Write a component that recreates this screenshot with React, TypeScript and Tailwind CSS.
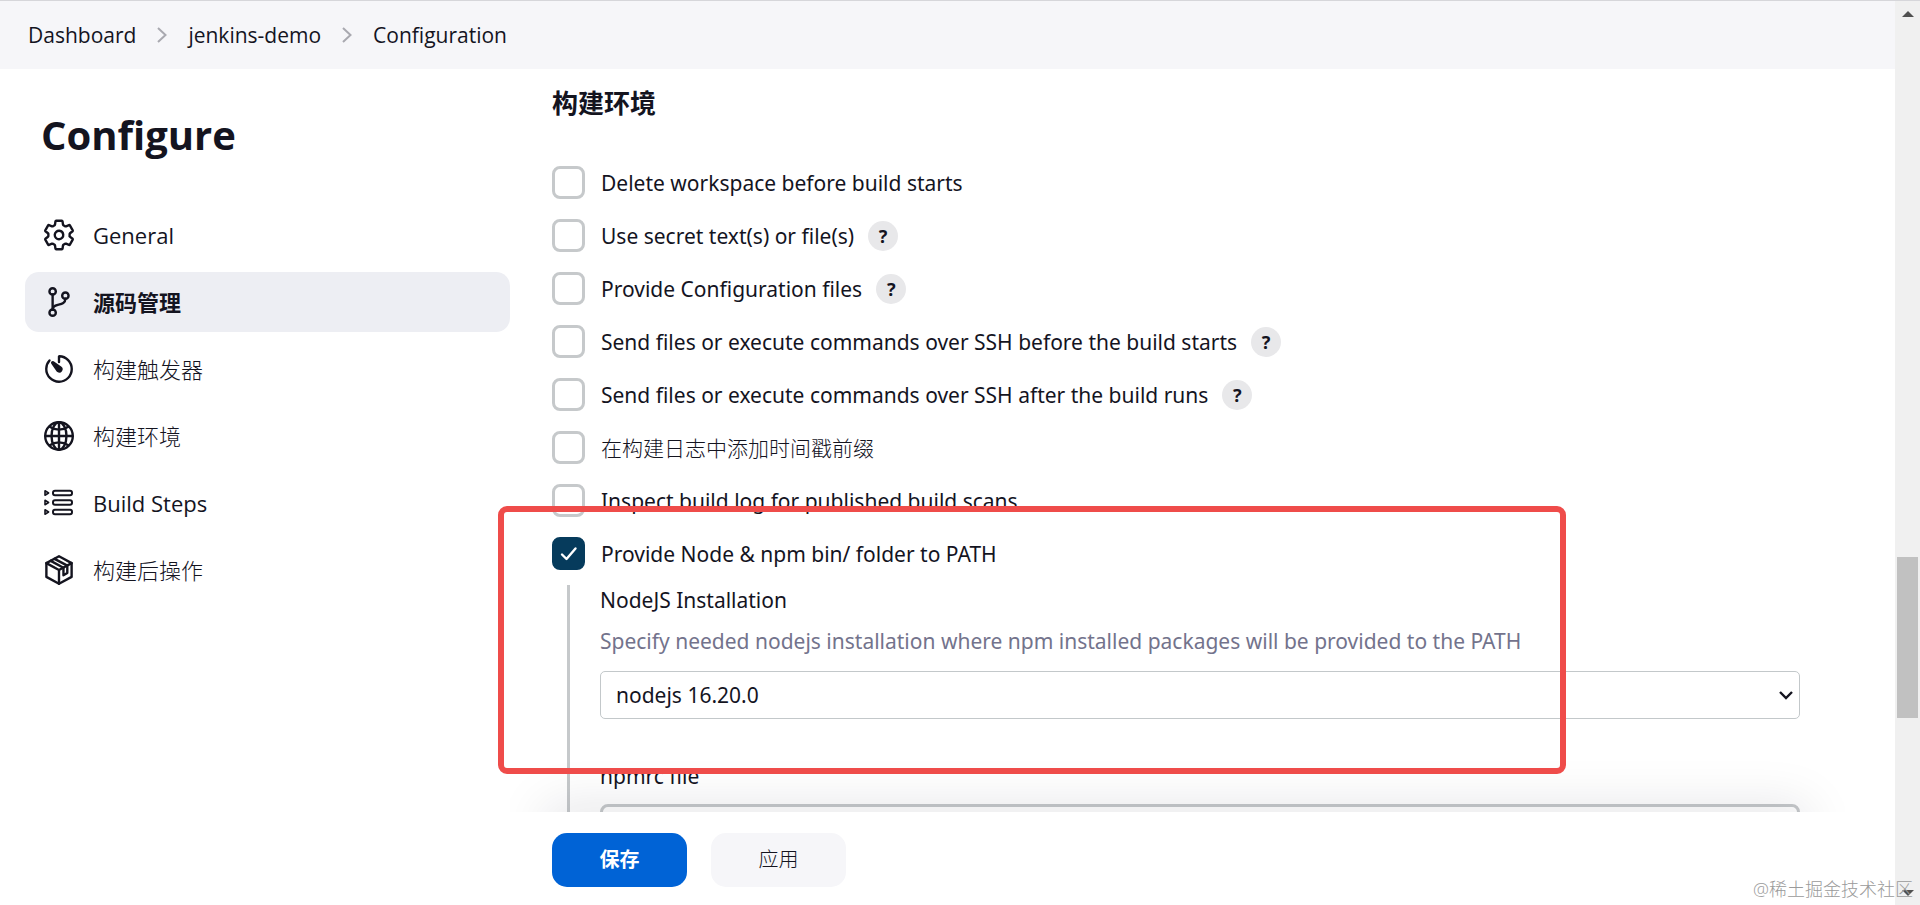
import React from "react";
import {
  IoSettingsOutline,
  IoGitBranchOutline,
  IoTimerOutline,
  IoGlobeOutline,
} from "react-icons/io5";

function StepsIcon() {
  return (
    <svg viewBox="0 0 34 34" className="size-[34px]" fill="none" stroke="currentColor" strokeWidth="2" strokeLinejoin="round">
      {[7, 16.5, 26].map((y) => (
        <g key={y}>
          <path d={`M3 ${y - 2.2}v4.4l3.600-2.200z`} strokeWidth="1.6" />
          <rect x="11" y={y - 2.3} width="19" height="4.6" rx="2" />
        </g>
      ))}
    </svg>
  );
}

function PackageIcon() {
  return (
    <svg viewBox="0 0 512 512" className="size-[34px]" fill="none" stroke="currentColor" strokeWidth="34" strokeLinejoin="round" strokeLinecap="round">
      <path d="M256 50 446 152v208L256 464 66 360V152z" />
      <path d="M66 152l190 104 190-104M256 256v206" />
      <path d="M131 118l192 104v112l58-32V190L189 88" />
    </svg>
  );
}

const navItems = [
  { label: "General", icon: <IoSettingsOutline size={34} /> },
  { label: "源码管理", icon: <IoGitBranchOutline size={34} />, active: true },
  { label: "构建触发器", icon: <IoTimerOutline size={34} />, cjk: true },
  { label: "构建环境", icon: <IoGlobeOutline size={34} />, cjk: true },
  { label: "Build Steps", icon: <StepsIcon /> },
  { label: "构建后操作", icon: <PackageIcon />, cjk: true },
];

const options = [
  { id: "delete-ws", label: "Delete workspace before build starts" },
  { id: "secret", label: "Use secret text(s) or file(s)", help: true },
  { id: "config-files", label: "Provide Configuration files", help: true },
  { id: "ssh-before", label: "Send files or execute commands over SSH before the build starts", help: true },
  { id: "ssh-after", label: "Send files or execute commands over SSH after the build runs", help: true },
  { id: "timestamps", label: "在构建日志中添加时间戳前缀", cjk: true },
  { id: "inspect", label: "Inspect build log for published build scans" },
  { id: "node", label: "Provide Node & npm bin/ folder to PATH", checked: true },
];

function Crumb({ children }: { children: string }) {
  return (
    <a href="#" className="text-[21px]">
      {children}
    </a>
  );
}

function CrumbArrow() {
  return (
    <svg viewBox="0 0 12 18" className="mx-5 h-[18px] w-3" fill="none" stroke="#a9a9b0" strokeWidth="2">
      <path d="M2 2l7.500 7L2 16" />
    </svg>
  );
}

function OptionRow({ id, label, help, cjk, checked }: { id: string; label: string; help?: boolean; cjk?: boolean; checked?: boolean }) {
  return (
    <div className="flex h-[33px] items-center">
      <span className="relative flex size-[33px] shrink-0">
        <input
          id={id}
          type="checkbox"
          defaultChecked={checked}
          className="peer size-[33px] appearance-none rounded-[8px] border-[3px] border-[#c6c9cb] bg-white checked:border-[#063b5c] checked:bg-[#063b5c]"
        />
        <svg viewBox="0 0 33 33" className="pointer-events-none absolute inset-0 hidden peer-checked:block" fill="none" stroke="#fff" strokeWidth="2.400" strokeLinecap="round" strokeLinejoin="round">
          <path d="M10 17.500l4.500 4.500L23.500 11.500" />
        </svg>
      </span>
      <label htmlFor={id} className={cjk ? "ml-4 font-light" : "ml-4"}>
        {label}
      </label>
      {help && (
        <button type="button" aria-label={`Help: ${label}`} className="ml-[14px] flex size-[30px] items-center justify-center rounded-full bg-[#e8e8ea] text-[18px] font-bold">
          ?
        </button>
      )}
    </div>
  );
}

export default function App() {
  return (
    <div className="relative flex h-screen overflow-hidden bg-white font-['Open_Sans','Noto_Sans_CJK_SC',sans-serif] leading-7 text-[#14141f]">
      <div className="flex min-w-0 flex-1 flex-col">
        <nav aria-label="Breadcrumb" className="flex h-[69px] shrink-0 items-center border-t border-[#d6d6da] bg-[#f6f6f9] pl-7">
          <Crumb>Dashboard</Crumb>
          <CrumbArrow />
          <Crumb>jenkins-demo</Crumb>
          <CrumbArrow />
          <Crumb>Configuration</Crumb>
        </nav>

        <div className="flex min-h-0 flex-1">
          <aside className="w-[510px] shrink-0 pl-[25px] pt-10">
            <h1 className="pl-4 text-[40px] font-bold leading-[52px]">Configure</h1>
            <ul className="mt-11 flex flex-col gap-[7px] [&_svg_circle]:[stroke-width:36px] [&_svg[viewBox='0_0_512_512']_path]:[stroke-width:36px]">
              {navItems.map((item) => (
                <li key={item.label}>
                  <a
                    href="#"
                    className={
                      item.active
                        ? "flex h-[60px] items-center gap-[17px] rounded-[14px] bg-[#edeef3] pl-[17px] text-[22px] font-bold"
                        : "flex h-[60px] items-center gap-[17px] rounded-[14px] pl-[17px] text-[22px]"
                    }
                  >
                    {item.icon}
                    <span className={item.cjk ? "font-light" : ""}>{item.label}</span>
                  </a>
                </li>
              ))}
            </ul>
          </aside>

          <div className="flex min-w-0 flex-1 flex-col">
            <main className="min-h-0 flex-1 overflow-hidden pl-[42px] pr-[95px] pt-4 font-['Noto_Sans','Noto_Sans_CJK_SC',sans-serif] text-[21px]">
              <h2 className="text-[26px] font-bold leading-9">构建环境</h2>
              <div className="mt-[45px] flex flex-col gap-5">
                {options.map((o) => (
                  <OptionRow key={o.id} {...o} />
                ))}
              </div>
              <div className="ml-[15px] mt-[15px] border-l-[3px] border-[#c6c9cb] pl-[30px]">
                <label htmlFor="nodejs" className="block leading-[30px]">
                  NodeJS Installation
                </label>
                <p className="mt-[11px] leading-[30px] text-[#73738c]">
                  Specify needed nodejs installation where npm installed packages will be provided to the PATH
                </p>
                <div className="relative mt-[15px]">
                  <select id="nodejs" className="block h-12 w-full appearance-none rounded-[5px] border border-[#c3c8ca] bg-white pl-[15px]">
                    <option>nodejs 16.20.0</option>
                  </select>
                  <svg viewBox="0 0 14 10" className="pointer-events-none absolute right-[7px] top-[19px] h-[10px] w-[14px]" fill="none" stroke="#14141f" strokeWidth="2.400">
                    <path d="M1 2l6 6 6-6" />
                  </svg>
                </div>
                <label htmlFor="npmrc" className="mt-[42px] block leading-[30px]">
                  npmrc file
                </label>
                <select id="npmrc" className="mt-[13px] block h-12 w-full appearance-none rounded-[8px] border-[3px] border-[#c6c9cb] bg-white">
                  <option></option>
                </select>
              </div>
            </main>

            <footer className="relative flex h-[93px] shrink-0 items-start gap-6 bg-white pl-[42px] pt-[21px]">
              <div className="pointer-events-none absolute bottom-full left-0 right-[50px] h-14 overflow-hidden">
                <div className="absolute left-[42px] right-[45px] top-full h-10 shadow-[0_0_50px_8px_rgba(20,20,40,0.1)]" />
              </div>
              <button type="button" className="h-[54px] w-[135px] rounded-[15px] bg-[#0063d6] text-[20px] font-bold text-white">
                保存
              </button>
              <button type="button" className="h-[54px] w-[135px] rounded-[15px] bg-[#f6f6f9] text-[20px] font-light">
                应用
              </button>
            </footer>
          </div>
        </div>
      </div>

      <div aria-hidden="true" className="flex w-[25px] shrink-0 flex-col items-center border-t border-[#d6d6da] bg-[#f0f0f0]">
        <svg viewBox="0 0 12 6" className="mt-[10px] h-[6px] w-3" fill="#505050">
          <path d="M6 0l6 6H0z" />
        </svg>
        <div className="flex-[540]" />
        <div className="w-[21px] flex-[161] bg-[#c1c1c1]" />
        <div className="flex-[172]" />
        <svg viewBox="0 0 12 6" className="mb-[9px] h-[6px] w-3" fill="#505050">
          <path d="M0 0h12L6 6z" />
        </svg>
      </div>

      <div className="pointer-events-none absolute left-[498px] top-[506px] h-[268px] w-[1068px] rounded-[9px] border-[6px] border-[#ef4c4a]" />
      <div className="pointer-events-none absolute bottom-[2px] right-[7px] text-[18px] font-light text-[#9a9a9a]">@稀土掘金技术社区</div>
    </div>
  );
}
